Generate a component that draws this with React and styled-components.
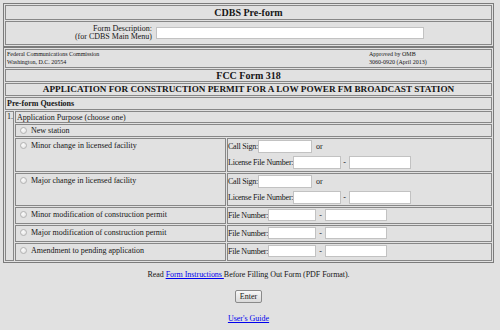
import React from "react";
import styled, { createGlobalStyle } from "styled-components";

const GlobalStyle = createGlobalStyle`
  html, body {
    margin: 0;
    background: #e1e1e1;
  }
  body {
    font-family: "Liberation Serif", "Times New Roman", serif;
    font-size: 8px;
    color: #161616;
  }
`;

const Page = styled.div`
  width: 491px;
  padding: 3px 0 0 3px;
`;

const Frame = styled.div`
  border: 1px solid #7b7b7b;
  padding: 1px;
  display: flex;
  flex-direction: column;
  gap: 1px;
`;

const Cell = styled.div`
  box-sizing: border-box;
  height: ${(p) => (p.$h ? `${p.$h}px` : "auto")};
  border: 1px solid #878787;
  padding: ${(p) => (p.$top ? "2px 1px 0" : "0 1px")};
  display: flex;
  align-items: ${(p) => (p.$top ? "flex-start" : "center")};
  justify-content: ${(p) => (p.$center ? "center" : "flex-start")};
  font-weight: ${(p) => (p.$bold ? 700 : 400)};
`;

const Heading = styled.span`
  font-size: ${(p) => p.$size}px;
  font-weight: 700;
  line-height: 1;
`;

const DescGrid = styled.div`
  display: grid;
  grid-template-columns: 145px 268px;
  column-gap: 4px;
  align-items: center;
`;

const DescLabel = styled.div`
  text-align: right;
  line-height: 8px;
`;

const Field = styled.input`
  box-sizing: border-box;
  width: ${(p) => p.$w}px;
  height: ${(p) => p.$h || 13}px;
  margin: 0;
  padding: 0;
  border: 1px solid #c2c2c2;
  background: #fff;
  font-size: 8px;
`;

const AgencyGrid = styled.div`
  display: grid;
  grid-template-columns: 362px 1fr;
  width: 100%;
  font-size: 6px;
  line-height: 7.5px;
`;

const QuestionRow = styled.div`
  box-sizing: border-box;
  height: 150px;
  display: grid;
  grid-template-columns: 9px 1fr;
  column-gap: 1px;
`;

const NumberCell = styled.div`
  box-sizing: border-box;
  border: 1px solid #878787;
  padding: 0 1px;
  line-height: 9px;
`;

const Options = styled.div`
  display: flex;
  flex-direction: column;
  gap: 1px;
`;

const OptionRow = styled.div`
  height: ${(p) => p.$h}px;
  display: grid;
  grid-template-columns: 211px 1fr;
  column-gap: 1px;
`;

const Radio = styled.span`
  flex: none;
  box-sizing: border-box;
  width: 7px;
  height: 7px;
  margin: ${(p) => (p.$top ? "1px" : "0")} 4px 0 3px;
  border: 1px solid #b3b3b3;
  border-radius: 50%;
  background: radial-gradient(circle at 40% 35%, #fbfbfb, #dedede);
`;

const FieldCell = styled.div`
  box-sizing: border-box;
  border: 1px solid #878787;
  padding: 1px 0 0 0;
  display: flex;
  flex-direction: column;
  gap: 3px;
`;

const FieldLine = styled.div`
  height: ${(p) => p.$h || 13}px;
  display: flex;
  align-items: center;
  white-space: pre;
`;

const FieldLabel = styled.span`
  flex: none;
  white-space: nowrap;
  letter-spacing: -0.22px;
`;

const Sep = styled.span`
  margin: 0 ${(p) => p.$r || 3}px 0 ${(p) => p.$l || 3}px;
`;

const Footer = styled.div`
  width: 491px;
  padding-left: 3px;
  display: flex;
  flex-direction: column;
  align-items: center;
`;

const Note = styled.div`
  margin-top: 7px;
  line-height: 9px;
  letter-spacing: -0.05px;
`;

const Link = styled.a`
  color: #0000ee;
  text-decoration: underline;
`;

const Button = styled.button`
  box-sizing: border-box;
  margin-top: 11px;
  width: 27px;
  height: 13px;
  padding: 0;
  border: 1px solid #8a8a8a;
  border-radius: 2px;
  background: linear-gradient(#f7f7f7, #dadada);
  font-family: "Liberation Serif", "Times New Roman", serif;
  font-size: 8px;
  color: #161616;
`;

const Guide = styled.div`
  margin-top: 11px;
  line-height: 9px;
`;

const FileNumber = () => (
  <FieldLine $h={12}>
    <FieldLabel>File Number:</FieldLabel>
    <Field $w={48} $h={12} />
    <Sep $l={3} $r={3}>-</Sep>
    <Field $w={62} $h={12} />
  </FieldLine>
);

const CallSign = () => (
  <>
    <FieldLine>
      <FieldLabel>Call Sign:</FieldLabel>
      <Field $w={54} />
      <Sep $l={4}>or</Sep>
    </FieldLine>
    <FieldLine>
      <FieldLabel>License File Number:</FieldLabel>
      <Field $w={48} />
      <Sep $l={2} $r={3}>-</Sep>
      <Field $w={62} />
    </FieldLine>
  </>
);

const options = [
  { label: "Minor change in licensed facility", h: 34, call: true },
  { label: "Major change in licensed facility", h: 33, call: true },
  { label: "Minor modification of construction permit", h: 17 },
  { label: "Major modification of construction permit", h: 17 },
  { label: "Amendment to pending application", h: 18 },
];

const App = () => {
  return (
    <>
      <GlobalStyle />
      <Page>
        <Frame>
          <Cell $h={15} $center>
            <Heading $size={10}>CDBS Pre-form</Heading>
          </Cell>
          <Cell $h={24}>
            <DescGrid>
              <DescLabel>
                Form Description:
                <br />
                (for CDBS Main Menu)
              </DescLabel>
              <Field $w={268} $h={12} />
            </DescGrid>
          </Cell>
        </Frame>
        <Frame>
          <Cell $h={19}>
            <AgencyGrid>
              <div>
                Federal Communications Commission
                <br />
                Washington, D.C. 20554
              </div>
              <div>
                Approved by OMB
                <br />
                3060-0920 (April 2013)
              </div>
            </AgencyGrid>
          </Cell>
          <Cell $h={13} $center>
            <Heading $size={10}>FCC Form 318</Heading>
          </Cell>
          <Cell $h={13} $center>
            <Heading $size={9.2}>
              APPLICATION FOR CONSTRUCTION PERMIT FOR A LOW POWER FM BROADCAST STATION
            </Heading>
          </Cell>
          <Cell $h={13} $bold>
            Pre-form Questions
          </Cell>
          <QuestionRow>
            <NumberCell>1.</NumberCell>
            <Options>
              <Cell $h={12}>Application Purpose (choose one)</Cell>
              <Cell $h={13}>
                <Radio />
                New station
              </Cell>
              {options.map((o) => (
                <OptionRow key={o.label} $h={o.h}>
                  <Cell $top>
                    <Radio $top />
                    {o.label}
                  </Cell>
                  <FieldCell>{o.call ? <CallSign /> : <FileNumber />}</FieldCell>
                </OptionRow>
              ))}
            </Options>
          </QuestionRow>
        </Frame>
      </Page>
      <Footer>
        <Note>
          Read <Link href="#">Form Instructions </Link>Before Filling Out Form (PDF Format).
        </Note>
        <Button>Enter</Button>
        <Guide>
          <Link href="#">User's Guide</Link>
        </Guide>
      </Footer>
    </>
  );
};

export default App;
